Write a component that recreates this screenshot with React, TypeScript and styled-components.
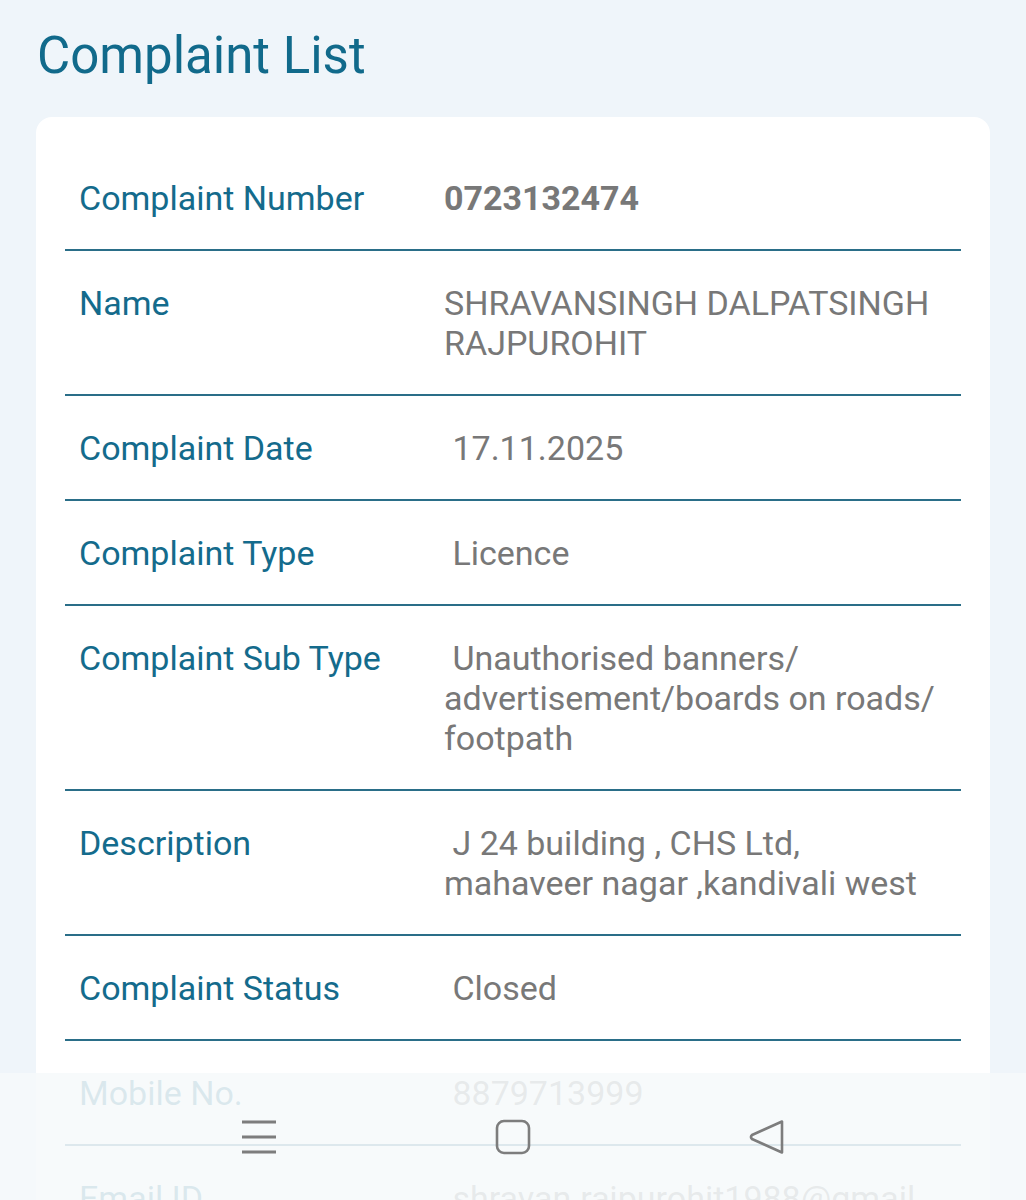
import React from 'react';
import styled, { createGlobalStyle } from 'styled-components';

const GlobalStyle = createGlobalStyle`
  html, body {
    margin: 0;
    padding: 0;
    background: #eff5fa;
    font-family: Roboto, "Liberation Sans", Arial, sans-serif;
  }
`;

const Page = styled.div`
  height: 1200px;
  overflow: hidden;
  padding: 0 36px;
`;

const Title = styled.h1`
  margin: 0;
  padding: 26px 0 0 1px;
  height: 117px;
  box-sizing: border-box;
  font-size: 51px;
  line-height: 60px;
  font-weight: 400;
  color: #116a8b;
`;

const Card = styled.div`
  background: #ffffff;
  border-radius: 16px;
  padding: 29px 29px 0;
`;

const Row = styled.div`
  display: grid;
  grid-template-columns: 365px 1fr;
  padding: 32px 14px 31px 14px;
  border-bottom: 2px solid #2a6e88;
`;

const Label = styled.div`
  font-size: 34px;
  line-height: 40px;
  color: #146b8c;
`;

const Value = styled.div<{ $bold?: boolean }>`
  font-size: 34px;
  line-height: 40px;
  color: #787878;
  white-space: pre-wrap;
  font-weight: ${({ $bold }) => ($bold ? 700 : 400)};
`;

const NavBar = styled.div`
  position: fixed;
  left: 0;
  right: 0;
  top: 1073px;
  height: 127px;
  background: rgba(246, 249, 251, 0.88);
  display: flex;
  justify-content: center;
  align-items: flex-start;
  padding-top: 46px;
  box-sizing: border-box;
`;

const NavSlot = styled.div`
  width: 254px;
  display: flex;
  justify-content: center;
`;

const rows: { label: string; lines: string[]; bold?: boolean }[] = [
  { label: 'Complaint Number', lines: ['0723132474'], bold: true },
  { label: 'Name', lines: ['SHRAVANSINGH DALPATSINGH', 'RAJPUROHIT'] },
  { label: 'Complaint Date', lines: [' 17.11.2025'] },
  { label: 'Complaint Type', lines: [' Licence'] },
  {
    label: 'Complaint Sub Type',
    lines: [' Unauthorised banners/', 'advertisement/boards on roads/', 'footpath'],
  },
  { label: 'Description', lines: [' J 24 building , CHS Ltd,', 'mahaveer nagar ,kandivali west'] },
  { label: 'Complaint Status', lines: [' Closed'] },
  { label: 'Mobile No.', lines: [' 8879713999'] },
  { label: 'Email ID', lines: [' shravan.rajpurohit1988@gmail', '.com'] },
];

export default function App() {
  return (
    <>
      <GlobalStyle />
      <Page>
        <Title>Complaint List</Title>
        <Card>
          {rows.map((r) => (
            <Row key={r.label}>
              <Label>{r.label}</Label>
              <Value $bold={r.bold}>
                {r.lines.map((l, i) => (
                  <React.Fragment key={i}>
                    {i > 0 && <br />}
                    {l}
                  </React.Fragment>
                ))}
              </Value>
            </Row>
          ))}
        </Card>
      </Page>
      <NavBar>
        <NavSlot>
          <svg width="36" height="36" viewBox="0 0 36 36">
            <g stroke="#7d7d7d" strokeWidth="3" strokeLinecap="butt">
              <line x1="1" y1="3" x2="35" y2="3" />
              <line x1="1" y1="18" x2="35" y2="18" />
              <line x1="1" y1="33" x2="35" y2="33" />
            </g>
          </svg>
        </NavSlot>
        <NavSlot>
          <svg width="36" height="36" viewBox="0 0 36 36">
            <rect x="2" y="2" width="32" height="32" rx="7" fill="none" stroke="#7d7d7d" strokeWidth="2.6" />
          </svg>
        </NavSlot>
        <NavSlot>
          <svg width="36" height="36" viewBox="0 0 36 36">
            <path d="M33 2.5 L33 33.5 L3 20 Q1 18 3 16 Z" fill="none" stroke="#7d7d7d" strokeWidth="2.6" strokeLinejoin="round" />
          </svg>
        </NavSlot>
      </NavBar>
    </>
  );
}
